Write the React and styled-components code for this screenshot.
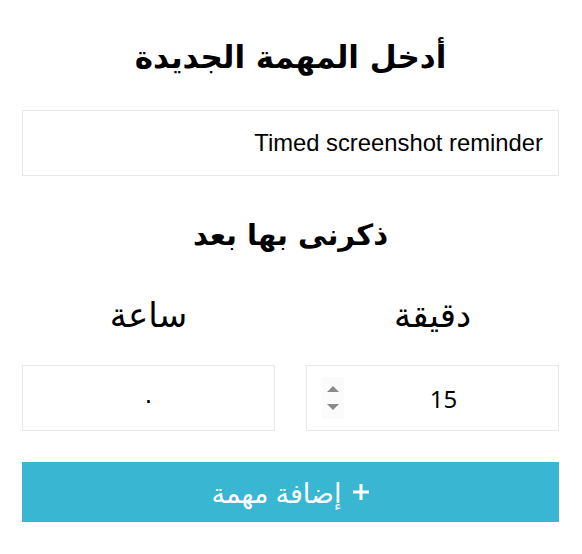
import { useState } from "react";
import styled, { createGlobalStyle } from "styled-components";

const GlobalStyle = createGlobalStyle`
  html, body {
    margin: 0;
    padding: 0;
    background: #ffffff;
  }
  * {
    box-sizing: border-box;
  }
`;

export default function App() {
  const [task, setTask] = useState("Timed screenshot reminder");
  const [minutes, setMinutes] = useState("15");
  const [hours, setHours] = useState("٠");

  return (
    <>
      <GlobalStyle />
      <Wrapper dir="rtl">
        <Title>أدخل المهمة الجديدة</Title>
        <TaskInput value={task} onChange={(e) => setTask(e.target.value)} />
        <SubTitle>ذكرنى بها بعد</SubTitle>
        <TimeRow>
          <Field>
            <Label>دقيقة</Label>
            <NumberBox>
              <ValueInput
                value={minutes}
                onChange={(e) => setMinutes(e.target.value)}
              />
              <Spinner>
                <Arrow />
                <Arrow down />
              </Spinner>
            </NumberBox>
          </Field>
          <Field>
            <Label>ساعة</Label>
            <NumberBox>
              <ValueInput
                value={hours}
                onChange={(e) => setHours(e.target.value)}
              />
            </NumberBox>
          </Field>
        </TimeRow>
        <AddButton>
          <svg width="18" height="18" viewBox="0 0 18 18">
            <path d="M9 1v16M1 9h16" stroke="#fff" strokeWidth="3" />
          </svg>
          إضافة مهمة
        </AddButton>
      </Wrapper>
    </>
  );
}

const Wrapper = styled.div`
  width: 582px;
  padding: 38px 23px 0 22px;
  display: flex;
  flex-direction: column;
  font-family: "DejaVu Sans", sans-serif;
  color: #000;
`;

const Title = styled.h1`
  margin: 0;
  font-size: 31px;
  line-height: 38px;
  font-weight: bold;
  text-align: center;
`;

const TaskInput = styled.input`
  margin-top: 34px;
  height: 66px;
  width: 100%;
  border: 1px solid #e8e8e8;
  padding: 0 15px;
  font-family: "Liberation Sans", Arial, sans-serif;
  font-size: 23.8px;
  color: #000;
  text-align: right;
  direction: rtl;
  outline: none;
`;

const SubTitle = styled.h2`
  margin: 40px 0 0;
  font-size: 29px;
  line-height: 38px;
  font-weight: bold;
  text-align: center;
`;

const TimeRow = styled.div`
  margin-top: 38px;
  display: grid;
  grid-template-columns: minmax(0, 1fr) minmax(0, 1fr);
  column-gap: 31px;
`;

const Field = styled.div`
  min-width: 0;
  display: flex;
  flex-direction: column;
  align-items: stretch;
`;

const Label = styled.div`
  font-family: "Noto Sans", "DejaVu Sans", sans-serif;
  font-size: 34px;
  line-height: 44px;
  text-align: center;
`;

const NumberBox = styled.div`
  margin-top: 29px;
  height: 66px;
  border: 1px solid #e8e8e8;
  display: flex;
  align-items: center;
  padding: 0 15px;
`;

const ValueInput = styled.input`
  flex: 1;
  width: 0;
  min-width: 0;
  height: 100%;
  border: none;
  outline: none;
  background: transparent;
  text-align: center;
  font-family: "Noto Sans", "DejaVu Sans", sans-serif;
  font-size: 24px;
  color: #000;
`;

const Spinner = styled.div`
  width: 22px;
  height: 42px;
  background: #fbfbfb;
  display: flex;
  flex-direction: column;
  align-items: center;
  justify-content: center;
  gap: 12px;
`;

const Arrow = styled.span`
  width: 0;
  height: 0;
  border-left: 6px solid transparent;
  border-right: 6px solid transparent;
  ${(p) =>
    p.down
      ? "border-top: 6px solid #8a8a8a;"
      : "border-bottom: 6px solid #8a8a8a;"}
`;

const AddButton = styled.button`
  margin-top: 31px;
  height: 60px;
  width: 100%;
  border: none;
  background: #38b6d2;
  color: #fff;
  font-family: "Noto Sans", "DejaVu Sans", sans-serif;
  font-size: 27px;
  display: flex;
  align-items: center;
  justify-content: center;
  gap: 10px;
  cursor: pointer;
`;
